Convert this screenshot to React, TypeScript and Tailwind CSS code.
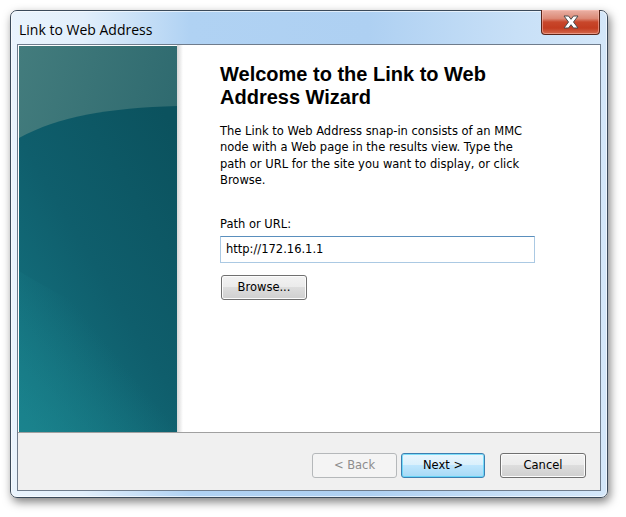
import React from "react";

const ui = { fontFamily: '"DejaVu Sans", Tahoma, sans-serif' };

function TealPanel() {
  return (
    <svg width="158" height="386" viewBox="0 0 158 386" className="block">
      <defs>
        <linearGradient id="top" x1="0" y1="0" x2="1" y2="0.6">
          <stop offset="0" stopColor="#437c7d" />
          <stop offset="1" stopColor="#2a666c" />
        </linearGradient>
        <linearGradient id="bot" x1="0.9" y1="0" x2="0.1" y2="1">
          <stop offset="0" stopColor="#0b525e" />
          <stop offset="0.5" stopColor="#0f5e6c" />
          <stop offset="1" stopColor="#157582" />
        </linearGradient>
        <linearGradient id="glow" x1="0" y1="1" x2="0.6" y2="0.5">
          <stop offset="0" stopColor="#1e8d95" stopOpacity="0.6" />
          <stop offset="1" stopColor="#1e8d95" stopOpacity="0" />
        </linearGradient>
      </defs>
      <rect width="158" height="386" fill="url(#top)" />
      <path d="M0 92 C 40 70, 90 62, 158 60 L158 386 L0 386 Z" fill="url(#bot)" />
      <path d="M0 225 C 40 250, 90 275, 158 290 L158 386 L0 386 Z" fill="url(#glow)" />
    </svg>
  );
}

function CloseX() {
  return (
    <svg width="18" height="14" viewBox="0 0 18 14">
      <path
        d="M2 1 H6.5 L9 4.3 L11.5 1 H16 L11.5 7 L16 13 H11.5 L9 9.7 L6.5 13 H2 L6.5 7 Z"
        fill="#ffffff"
        stroke="#4a4a4a"
        strokeWidth="1"
        strokeLinejoin="round"
      />
    </svg>
  );
}

function Btn({ children, variant }: { children: React.ReactNode; variant?: "default" | "disabled" }) {
  if (variant === "disabled") {
    return (
      <div className="w-[85px] h-[25px] rounded-[3px] border border-[#b5b8ba] bg-[#f4f4f4] flex items-center justify-center text-[11.5px] text-[#8d8d8d]" style={ui}>
        {children}
      </div>
    );
  }
  if (variant === "default") {
    return (
      <div className="w-[84px] h-[25px] rounded-[3px] border border-[#3c7fb1] bg-[linear-gradient(#eaf6fd_0%,#d9f0fc_50%,#bee6fd_50%,#a7d9f5_100%)] shadow-[inset_0_0_0_1px_#48d2f8aa] flex items-center justify-center text-[11.5px] text-black" style={ui}>
        {children}
      </div>
    );
  }
  return (
    <div className="w-[86px] h-[25px] rounded-[3px] border border-[#707070] bg-[linear-gradient(#f2f2f2_0%,#ebebeb_50%,#dddddd_50%,#cfcfcf_100%)] shadow-[inset_0_0_0_1px_#fcfcfc] flex items-center justify-center text-[11.5px] text-black" style={ui}>
      {children}
    </div>
  );
}

export default function App() {
  return (
    <div className="w-[626px] h-[517px] bg-white relative overflow-hidden">
      <div className="pt-[10px] pl-[10px]">
        <div className="relative w-[598px] h-[488px] rounded-[7px] border border-[#3b4a5a] shadow-[2px_4px_10px_rgba(0,0,0,0.5)] bg-[linear-gradient(90deg,#eaf4fd_0%,#e2effb_12%,#b0d2f3_30%,#aed0f2_60%,#c8e0f7_85%,#d4e7f9_100%)] px-[6px] pb-[6px] flex flex-col">
          <div className="absolute inset-0 rounded-[6px] shadow-[inset_0_0_0_1px_rgba(255,255,255,0.6)] pointer-events-none" />
          <div className="h-[33px] flex items-center pl-[2px] pt-[3px] relative">
            <span className="text-[14px] text-black" style={{ fontFamily: '"Open Sans", "Noto Sans", sans-serif' }}>
              Link to Web Address
            </span>
          </div>
          <div className="absolute top-[-1px] right-[7px] w-[59px] h-[25px] rounded-b-[4px] border border-[#5a2418] border-t-0 bg-[linear-gradient(#eab1a5_0%,#dc8a77_35%,#c8472b_50%,#c33c20_75%,#d4694d_100%)] shadow-[inset_0_0_0_1px_rgba(255,200,190,0.5)] flex items-center justify-center">
            <CloseX />
          </div>
          <div className="flex-1 border border-[#6f7c8c] bg-white flex flex-col relative">
            <div className="flex-1 flex">
              <div className="pl-[1px] pt-[1px]">
                <TealPanel />
              </div>
              <div className="w-[6px] bg-[linear-gradient(90deg,#d6d6d6,#ffffff)]" />
              <div className="pl-[37px] pt-[18px] flex flex-col">
                <h1 className="text-[20px] leading-[23px] font-bold text-black w-[300px]" style={{ fontFamily: '"Liberation Sans", Arial, sans-serif' }}>
                  Welcome to the Link to Web Address Wizard
                </h1>
                <p className="mt-[14px] text-[11.5px] leading-[16.3px] text-black w-[318px]" style={ui}>
                  The Link to Web Address snap-in consists of an MMC node with a Web page in the results view. Type the path or URL for the site you want to display, or click Browse.
                </p>
                <div className="mt-[28px] text-[11.5px] leading-[16px] text-black" style={ui}>
                  Path or URL:
                </div>
                <div className="mt-[4px] w-[315px] h-[27px] border border-[#abc9e3] border-t-[#5a8fbd] flex items-center pl-[5px] text-[11.5px] text-black" style={ui}>
                  http://172.16.1.1
                </div>
                <div className="mt-[12px] pl-[1px]">
                  <Btn>Browse...</Btn>
                </div>
              </div>
            </div>
            <div className="h-[58px] border-t border-[#a0a0a0] bg-[#f0f0f0] flex items-start justify-end pt-[20px] pr-[14px]">
              <Btn variant="disabled">&lt; Back</Btn>
              <div className="ml-[4px]">
                <Btn variant="default">Next &gt;</Btn>
              </div>
              <div className="ml-[15px]">
                <Btn>Cancel</Btn>
              </div>
            </div>
          </div>
        </div>
      </div>
    </div>
  );
}
